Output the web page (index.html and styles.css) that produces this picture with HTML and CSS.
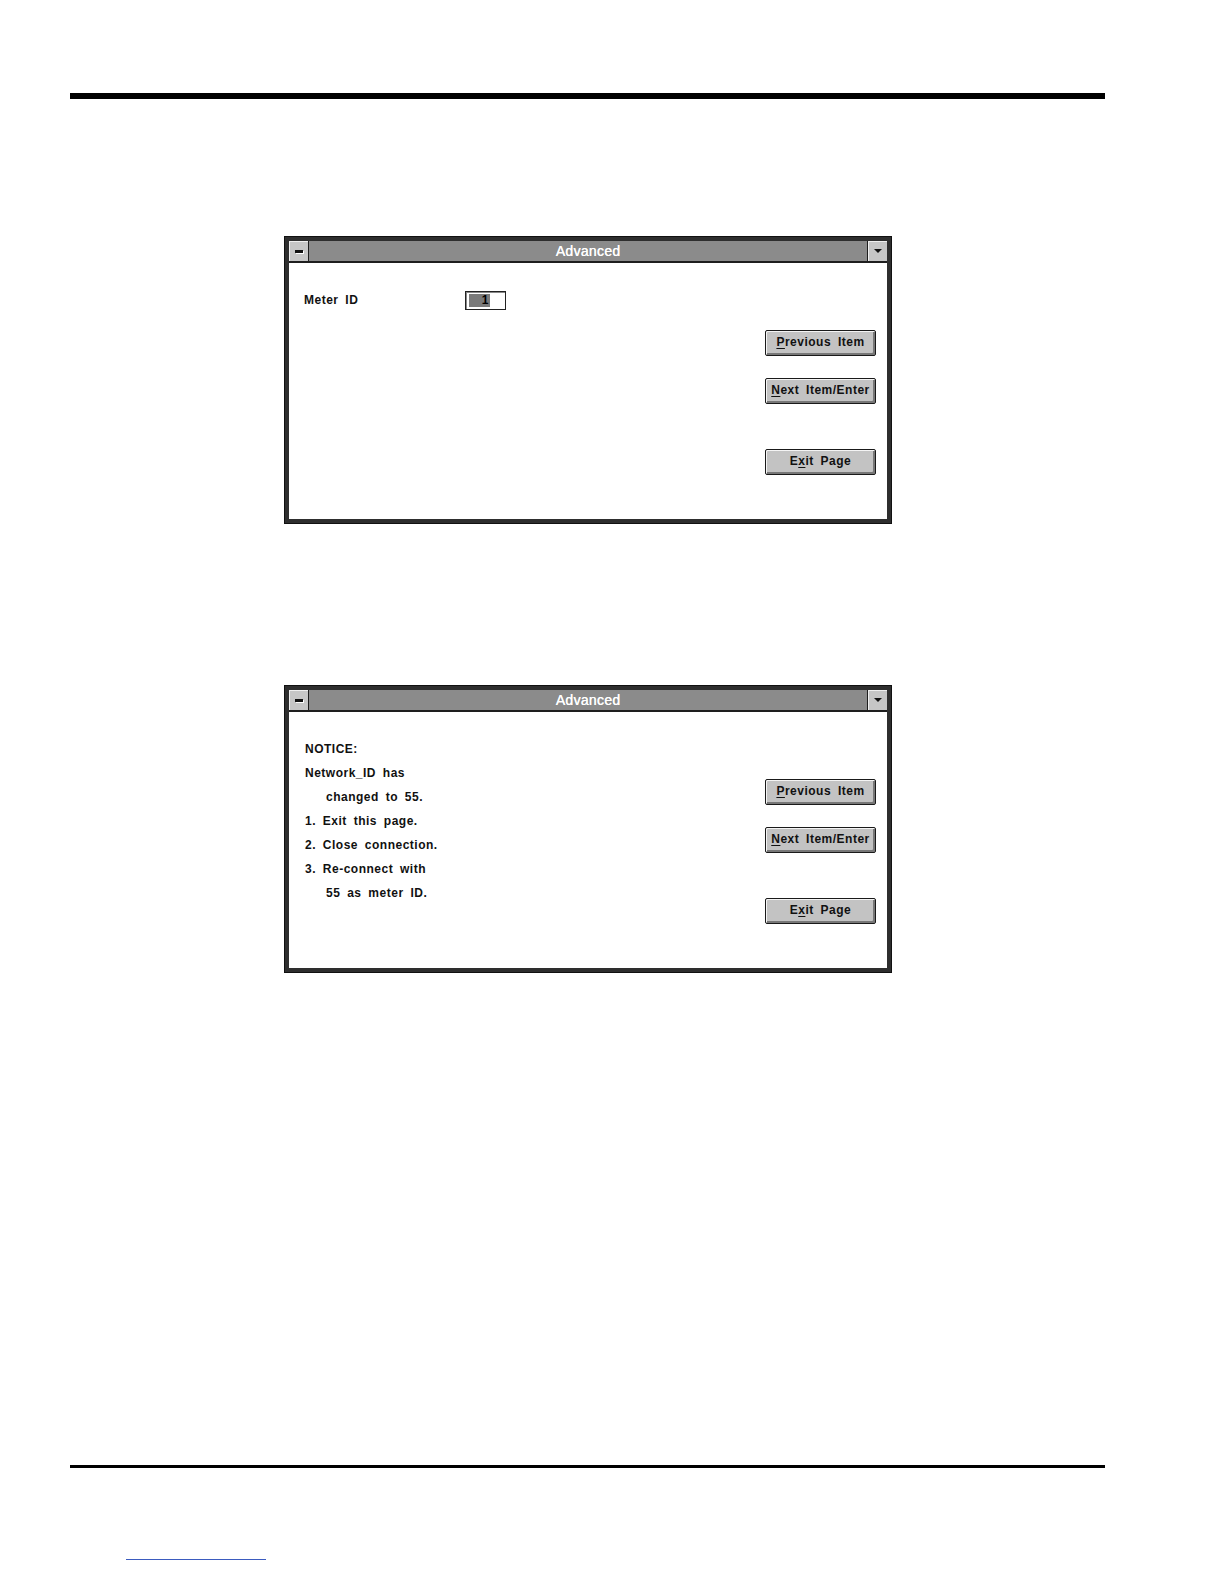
FILE: index.html
```html
<!DOCTYPE html>
<html>
<head>
<meta charset="utf-8">
<link rel="stylesheet" href="styles.css">
</head>
<body>
<div class="page">
  <div class="rule-top"></div>

  <div class="win win-1">
    <div class="titlebar">
      <div class="sysbox"><span class="dash"></span></div>
      <div class="title">Advanced</div>
      <div class="dropbox"><span class="tri"></span></div>
    </div>
    <div class="body">
      <div class="left">
        <div class="field">
          <span class="label">Meter ID</span>
          <span class="input"><span class="sel">1</span></span>
        </div>
      </div>
      <div class="buttons">
        <div class="btn"><u>P</u>revious Item</div>
        <div class="btn"><u>N</u>ext Item/Enter</div>
        <div class="btn btn-exit">E<u>x</u>it Page</div>
      </div>
    </div>
  </div>

  <div class="win win-2">
    <div class="titlebar">
      <div class="sysbox"><span class="dash"></span></div>
      <div class="title">Advanced</div>
      <div class="dropbox"><span class="tri"></span></div>
    </div>
    <div class="body">
      <div class="left notice">
        <div class="line">NOTICE:</div>
        <div class="line">Network_ID has</div>
        <div class="line indent">changed to 55.</div>
        <div class="line">1. Exit this page.</div>
        <div class="line">2. Close connection.</div>
        <div class="line">3. Re-connect with</div>
        <div class="line indent">55 as meter ID.</div>
      </div>
      <div class="buttons">
        <div class="btn"><u>P</u>revious Item</div>
        <div class="btn"><u>N</u>ext Item/Enter</div>
        <div class="btn btn-exit">E<u>x</u>it Page</div>
      </div>
    </div>
  </div>

  <div class="rule-bottom"></div>
  <div class="link-line"></div>
</div>
</body>
</html>
```

FILE: styles.css
```css
html, body {
  margin: 0;
  padding: 0;
  background: #ffffff;
}

.page {
  display: flex;
  flex-direction: column;
  align-items: flex-start;
  font-family: "Liberation Sans", Arial, sans-serif;
}

.rule-top {
  margin-top: 93px;
  margin-left: 70px;
  width: 1035px;
  height: 6px;
  background: #000;
}

.win {
  margin-left: 285px;
  width: 606px;
  height: 286px;
  box-sizing: border-box;
  border: 4px solid #2e2e2e;
  outline: 1px solid #111;
  background: #fff;
  display: flex;
  flex-direction: column;
}

.win-1 { margin-top: 138px; }
.win-2 { margin-top: 163px; }

.titlebar {
  height: 20px;
  border-bottom: 2px solid #1e1e1e;
  background: #8b8b8b;
  display: flex;
  align-items: stretch;
}

.sysbox, .dropbox {
  width: 19px;
  background: #c6c6c6;
  display: flex;
  align-items: center;
  justify-content: center;
  box-shadow: inset 1px 1px 0 #efefef;
}
.sysbox { border-right: 1px solid #1e1e1e; }
.dropbox { border-left: 1px solid #1e1e1e; }

.dash {
  width: 8px;
  height: 3px;
  background: #111;
  box-shadow: 1px 1px 0 #fff;
}

.tri {
  width: 0;
  height: 0;
  border-left: 4px solid transparent;
  border-right: 4px solid transparent;
  border-top: 4px solid #111;
}

.title {
  flex: 1;
  text-align: center;
  color: #fff;
  font-size: 14px;
  line-height: 20px;
  letter-spacing: 0.3px;
  text-shadow: 0.3px 0 0 #fff;
}

.body {
  flex: 1;
  display: flex;
  justify-content: space-between;
}

.left {
  padding-top: 25px;
  padding-left: 15px;
  font-size: 12px;
  font-weight: bold;
  color: #111;
  letter-spacing: 0.5px;
  word-spacing: 3px;
}

.field {
  display: flex;
  align-items: center;
  height: 24px;
}

.label {
  width: 161px;
}

.input {
  width: 41px;
  height: 19px;
  box-sizing: border-box;
  border: 1px solid #222;
  box-shadow: inset 1px 1px 0 #888;
  display: flex;
  align-items: center;
  padding-left: 3px;
}

.sel {
  width: 21px;
  height: 13px;
  background: #7a7a7a;
  color: #000;
  font-size: 12px;
  line-height: 13px;
  text-align: right;
  padding-right: 1px;
  box-sizing: border-box;
}

.notice { padding-left: 16px; }

.line {
  height: 24px;
  line-height: 24px;
  white-space: pre;
}

.indent { padding-left: 21px; }

.buttons {
  padding-top: 67px;
  padding-right: 11px;
  display: flex;
  flex-direction: column;
  gap: 22px;
}

.btn {
  width: 111px;
  height: 26px;
  box-sizing: border-box;
  border: 1px solid #1a1a1a;
  border-radius: 2px;
  background: #c3c3c3;
  box-shadow: inset 1px 1px 0 #f4f4f4, inset -2px -2px 0 #777;
  text-align: center;
  font-size: 12px;
  font-weight: bold;
  line-height: 23px;
  letter-spacing: 0.5px;
  word-spacing: 3px;
  color: #111;
  white-space: nowrap;
}

.btn u { text-underline-offset: 2px; }

.btn-exit { margin-top: 23px; }

.rule-bottom {
  margin-top: 493px;
  margin-left: 70px;
  width: 1035px;
  height: 3px;
  background: #000;
}

.link-line {
  margin-top: 91px;
  margin-left: 126px;
  width: 140px;
  height: 1px;
  background: #3b5bbf;
}
```
